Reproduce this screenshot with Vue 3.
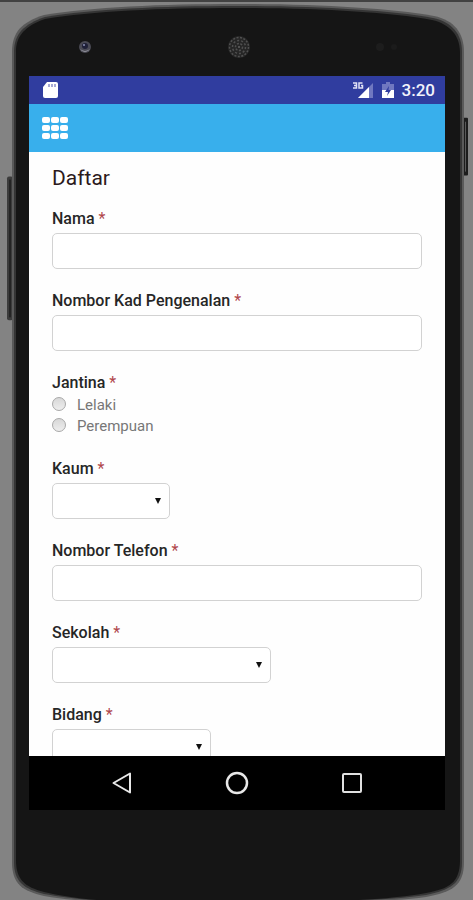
<template>
  <div class="stage">
    <!-- phone body -->
    <svg class="shell" viewBox="0 0 473 900" preserveAspectRatio="none" aria-hidden="true">
      <rect x="7" y="175" width="6" height="144" rx="2" fill="#3c3c3c" />
      <rect x="9" y="178" width="2" height="138" fill="#242424" />
      <rect x="463" y="116" width="5" height="58" rx="1" fill="#1c1c1c" />
      <rect x="465" y="120" width="1" height="50" fill="#5a5a5a" />
      <path
        d="M12 50 C12 30 22 20 44 13 C92 5 160 2 237 2 C316 2 388 6 434 14 C454 18 464 31 464 50 L464 862 C464 886 452 892 426 897 C405 900 380 901 340 902 L110 902 C80 901 62 899 44 896 C22 891 12 884 12 862 Z"
        fill="#5a5a5a"
      />
      <path
        d="M14 50 C14 32 24 22 45 15 C92 7 160 4 237 4 C316 4 388 8 433 16 C452 20 462 32 462 50 L462 862 C462 884 450 890 426 895 C405 898 380 900 340 901 L110 901 C80 900 62 897 44 894 C24 889 14 882 14 862 Z"
        fill="#353535"
      />
      <path
        d="M16 50 C16 34 25 24 45 17 C92 9 160 6 237 6 C316 6 388 10 432 18 C450 22 460 34 460 50 L460 860 C460 883 449 889 426 893 C405 897 380 899 340 901 L110 901 C80 899 62 896 44 892 C25 887 16 880 16 860 Z"
        fill="#151515"
      />
    </svg>

    <div class="phone">
      <div class="bezel-top" aria-hidden="true">
        <svg class="camera" width="14" height="14" viewBox="0 0 14 14">
          <circle cx="7" cy="7" r="6" fill="#4a4a54" />
          <path d="M2 9 A6 6 0 0 0 12 9 A8 8 0 0 1 2 9" fill="#a8a8b0" />
          <circle cx="7" cy="6" r="3" fill="#1f2038" />
          <circle cx="6" cy="5" r="1" fill="#8c90b4" />
        </svg>
        <svg width="24" height="24" viewBox="0 0 24 24">
          <circle cx="12" cy="12" r="11" fill="#262626" />
          <circle
            v-for="ring in speakerRings"
            :key="ring.r"
            cx="12"
            cy="12"
            :r="ring.r"
            fill="none"
            stroke="#505050"
            stroke-width="1.5"
            :stroke-dasharray="ring.dash"
          />
          <circle cx="12" cy="12" r="1" fill="#626262" />
        </svg>
        <svg class="sensors" width="24" height="10" viewBox="0 0 24 10">
          <circle cx="5" cy="5" r="4" fill="#1d1d1d" />
          <circle cx="19" cy="5" r="3" fill="#1b1b1b" />
        </svg>
      </div>

      <div class="screen">
        <div class="status-bar">
          <svg width="16" height="18" viewBox="0 0 16 18" aria-hidden="true">
            <path d="M5 1 H14 Q16 1 16 3 V15 Q16 17 14 17 H3 Q1 17 1 15 V6 Z" fill="#fff" />
            <path d="M7 3 V6 M10 3 V6 M13 3 V6" stroke="#8a8fc8" stroke-width="1.5" />
          </svg>
          <div class="status-right">
            <svg width="22" height="18" viewBox="0 0 22 18" aria-hidden="true">
              <path d="M6 17 L21 2 V17 Z" fill="#7078c0" />
              <path d="M6 17 L17 6 V17 Z" fill="#fff" />
              <path
                d="M1 2 H4.5 V7 H1 M2 4.5 H4.5 M10.5 2 H7 V7 H10.5 V4.5 H9"
                fill="none"
                stroke="#dfe1f5"
                stroke-width="1.5"
              />
            </svg>
            <svg width="12" height="18" viewBox="0 0 12 18" aria-hidden="true">
              <path d="M4 1 H8 V3 H12 V9 H0 V3 H4 Z" fill="#7078c0" />
              <path d="M0 9 H12 V17 H0 Z" fill="#fff" />
              <path d="M7 5 L3 11 H6 L5 15 L9 9 H6.5 Z" fill="#303d9f" />
            </svg>
            <span class="clock">3:20</span>
          </div>
        </div>

        <header class="app-bar">
          <button type="button" class="menu-btn" aria-label="Menu">
            <svg width="26" height="22" viewBox="0 0 26 22">
              <template v-for="row in 3" :key="row">
                <rect
                  v-for="col in 3"
                  :key="col"
                  :x="(col - 1) * 9"
                  :y="(row - 1) * 8"
                  width="8"
                  height="6"
                  rx="2"
                  fill="#fff"
                />
              </template>
            </svg>
          </button>
        </header>

        <form class="form" @submit.prevent>
          <h1 class="title">Daftar</h1>
          <div class="fields">
            <template v-for="field in fields" :key="field.id">
              <fieldset v-if="field.type === 'radio'" class="field">
                <legend class="field-label">{{ field.label }} <span class="required">*</span></legend>
                <div class="radio-list">
                  <label v-for="option in field.options" :key="option" class="radio-row">
                    <input v-model="form[field.id]" type="radio" :name="field.id" :value="option" />
                    <span>{{ option }}</span>
                  </label>
                </div>
              </fieldset>

              <div v-else class="field">
                <label class="field-label" :for="field.id">
                  {{ field.label }} <span class="required">*</span>
                </label>
                <div v-if="field.type === 'select'" class="select-wrap" :class="`select-wrap--${field.size}`">
                  <select :id="field.id" v-model="form[field.id]" class="control">
                    <option value=""></option>
                  </select>
                  <svg class="caret" width="6" height="6" viewBox="0 0 6 6" aria-hidden="true">
                    <path d="M0 0 H6 L3 6 Z" fill="#111" />
                  </svg>
                </div>
                <input v-else :id="field.id" v-model="form[field.id]" class="control" :type="field.type" />
              </div>
            </template>
          </div>
        </form>

        <nav class="nav-bar">
          <button type="button" aria-label="Back">
            <svg width="24" height="24" viewBox="0 0 24 24">
              <path d="M20 2.5 V21.5 L3.5 12 Z" fill="none" stroke="#e8e8e8" stroke-width="2" stroke-linejoin="round" />
            </svg>
          </button>
          <button type="button" aria-label="Home">
            <svg width="24" height="24" viewBox="0 0 24 24">
              <circle cx="12" cy="12" r="10" fill="none" stroke="#e8e8e8" stroke-width="2.5" />
            </svg>
          </button>
          <button type="button" aria-label="Recent apps">
            <svg width="24" height="24" viewBox="0 0 24 24">
              <rect x="3" y="3" width="18" height="18" rx="1" fill="none" stroke="#e0e0e0" stroke-width="2" />
            </svg>
          </button>
        </nav>
      </div>
    </div>
  </div>
</template>

<script setup>
import { reactive } from 'vue'

const fields = [
  { id: 'nama', label: 'Nama', type: 'text' },
  { id: 'kad', label: 'Nombor Kad Pengenalan', type: 'text' },
  { id: 'jantina', label: 'Jantina', type: 'radio', options: ['Lelaki', 'Perempuan'] },
  { id: 'kaum', label: 'Kaum', type: 'select', size: 'small' },
  { id: 'telefon', label: 'Nombor Telefon', type: 'tel' },
  { id: 'sekolah', label: 'Sekolah', type: 'select', size: 'large' },
  { id: 'bidang', label: 'Bidang', type: 'select', size: 'medium' }
]

const form = reactive({
  nama: '',
  kad: '',
  jantina: '',
  kaum: '',
  telefon: '',
  sekolah: '',
  bidang: ''
})

const speakerRings = [
  { r: 3.5, dash: '2 1.5' },
  { r: 6.5, dash: '2 2' },
  { r: 9.5, dash: '2 1.5' }
]
</script>

<style>
body {
  background: #838383;
}
</style>

<style scoped>
.stage {
  position: relative;
  height: 100vh;
  box-sizing: border-box;
  border-top: 2px solid #424242;
  overflow: hidden;
  font-family: Roboto, "Liberation Sans", sans-serif;
}

.shell {
  position: absolute;
  inset: 0;
  width: 100%;
  height: 100%;
}

.phone {
  position: relative;
  display: flex;
  flex-direction: column;
  height: 100%;
  box-sizing: border-box;
  padding: 0 28px 90px 29px;
}

.bezel-top {
  display: grid;
  grid-template-columns: 1fr auto 1fr;
  align-items: center;
  flex-shrink: 0;
  height: 74px;
  padding: 16px 46px 0 49px;
  box-sizing: border-box;
}

.sensors {
  justify-self: end;
}

.screen {
  display: flex;
  flex-direction: column;
  flex: 1;
  min-height: 0;
}

.status-bar {
  display: flex;
  align-items: center;
  justify-content: space-between;
  flex-shrink: 0;
  height: 28px;
  padding: 0 10px 0 13px;
  background: #303d9f;
}

.status-right {
  display: flex;
  align-items: center;
  gap: 8px;
}

.clock {
  color: #f2f3fb;
  font-size: 17px;
  font-weight: 500;
  line-height: 20px;
}

.app-bar {
  display: flex;
  align-items: center;
  flex-shrink: 0;
  height: 48px;
  padding: 0 13px;
  background: #38afec;
}

.menu-btn,
.nav-bar button {
  display: flex;
  padding: 0;
  border: none;
  background: none;
  cursor: pointer;
}

.form {
  flex: 1;
  min-height: 0;
  overflow: hidden;
  padding: 12px 23px 0;
  background: #fefefe;
}

.title {
  margin: 0 0 17px;
  color: #2c1a1c;
  font-size: 21px;
  font-weight: 400;
  line-height: 28px;
}

.fields {
  display: flex;
  flex-direction: column;
  gap: 22px;
}

.field {
  min-width: 0;
  margin: 0;
  padding: 0;
  border: none;
}

.field-label {
  display: block;
  padding: 0;
  margin-bottom: 4px;
  color: #262626;
  font-size: 16px;
  font-weight: 500;
  line-height: 20px;
}

.required {
  color: #b0474c;
  font-weight: 400;
}

.control {
  display: block;
  width: 100%;
  height: 36px;
  box-sizing: border-box;
  padding: 0 10px;
  border: 1px solid #d2d2d2;
  border-radius: 5px;
  background: #fff;
  color: #333;
  font-family: inherit;
  font-size: 15px;
  outline: none;
  appearance: none;
}

.select-wrap {
  position: relative;
  max-width: 100%;
}

.select-wrap--small {
  width: 118px;
}

.select-wrap--medium {
  width: 159px;
}

.select-wrap--large {
  width: 219px;
}

.caret {
  position: absolute;
  top: 15px;
  right: 9px;
  pointer-events: none;
}

.radio-list {
  margin-top: -2px;
}

.radio-row {
  display: flex;
  align-items: flex-start;
  gap: 11px;
  color: #777;
  font-size: 15px;
  line-height: 21px;
}

.radio-row input {
  width: 14px;
  height: 14px;
  margin: 2px 0 0;
  border: 1px solid #a8a8a8;
  border-radius: 50%;
  background: linear-gradient(#d8d8d8, #eee);
  appearance: none;
}

.radio-row input:checked {
  background: radial-gradient(#444 35%, #eee 40%);
}

.nav-bar {
  display: flex;
  align-items: center;
  justify-content: space-between;
  flex-shrink: 0;
  height: 54px;
  padding: 0 81px;
  background: #000;
}
</style>
